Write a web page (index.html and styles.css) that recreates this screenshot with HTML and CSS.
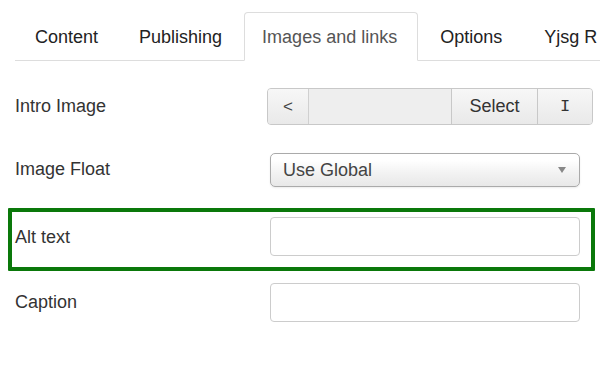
FILE: index.html
```html
<!DOCTYPE html>
<html lang="en">
<head>
    <meta charset="UTF-8">
    <title>Images and links</title>
    <link rel="stylesheet" href="styles.css">
</head>
<body>

    <!-- Tabs -->
    <ul class="tabs">
        <li class="tab">Content</li>
        <li class="tab">Publishing</li>
        <li class="tab active">Images and links</li>
        <li class="tab">Options</li>
        <li class="tab">Yjsg R</li>
    </ul>

    <!-- Fields -->
    <div class="fields">
        <div class="row row-image">
            <label class="label">Intro Image</label>
            <div class="media-group">
                <span class="btn btn-prev">&lt;</span>
                <span class="media-path"></span>
                <span class="btn btn-select">Select</span>
                <span class="btn btn-clear">I</span>
            </div>
        </div>

        <div class="row row-float">
            <label class="label">Image Float</label>
            <div class="select">
                <span>Use Global</span>
                <span class="caret"></span>
            </div>
        </div>

        <div class="row row-alt">
            <label class="label">Alt text</label>
            <input type="text" class="text-input" />
        </div>

        <div class="row row-caption">
            <label class="label">Caption</label>
            <input type="text" class="text-input" />
        </div>
    </div>

</body>
</html>
```

FILE: styles.css
```css
/* Reset */
body, ul {
    margin: 0;
    padding: 0;
}

body {
    background: #fff;
    font-family: 'Liberation Sans', Arial, sans-serif;
    font-size: 18px;
    color: #333;
    width: 600px;
    overflow: hidden;
}

/* Tabs */
.tabs {
    list-style: none;
    display: flex;
    margin: 12px 0 0 15px;
    border-bottom: 1px solid #ddd;
    white-space: nowrap;
}

.tab {
    height: 47px;
    line-height: 48px;
    padding: 0 20px 0 19px;
    color: #222;
    border: 1px solid transparent;
    border-bottom: none;
    margin-bottom: -1px;
}

.tab.active {
    color: #555;
    background: #fff;
    border-color: #ddd;
    border-bottom: 1px solid #fff;
    border-radius: 4px 4px 0 0;
    padding: 0 20px 0 17px;
    margin-left: 1px;
}

.tab:nth-child(4) {
    padding-left: 21px;
}

.tab:nth-child(5) {
    padding-left: 20px;
}

/* Rows */
.fields {
    padding-left: 8px;
}

.row {
    display: flex;
    align-items: center;
    width: 587px;
    box-sizing: border-box;
    padding-left: 7px;
}

.label {
    width: 255px;
    flex-shrink: 0;
}

.row-image {
    margin-top: 27px;
    height: 37px;
}

.row-image .label {
    width: 252px;
}

.row-float {
    margin-top: 28px;
    height: 33px;
}

.row-alt {
    margin-top: 22px;
    border: 4px solid #0a780a;
    border-radius: 1px;
    padding: 5px 0 11px 3px;
}

.row-alt .label {
    padding-top: 2px;
}

.row-caption {
    margin-top: 12px;
}

/* Media field */
.media-group {
    display: flex;
    height: 37px;
    width: 326px;
    border: 1px solid #c8c8c8;
    border-radius: 4px;
    box-sizing: border-box;
    overflow: hidden;
    background: #eee;
}

.btn {
    display: flex;
    align-items: center;
    justify-content: center;
    background: linear-gradient(#f7f7f7, #e9e9e9);
    color: #333;
}

.btn-prev {
    width: 40px;
    border-right: 1px solid #d0d0d0;
    font-size: 17px;
    color: #444;
}

.media-path {
    flex: 1;
    background: #eee;
}

.btn-select {
    width: 85px;
    border-left: 1px solid #c8c8c8;
}

.btn-clear {
    width: 54px;
    border-left: 1px solid #c8c8c8;
    font-family: 'Liberation Mono', monospace;
    font-size: 17px;
}

/* Select */
.select {
    display: flex;
    align-items: center;
    justify-content: space-between;
    width: 310px;
    height: 34px;
    box-sizing: border-box;
    padding: 1px 13px 0 12px;
    border: 1px solid #aaa;
    border-radius: 5px;
    background: linear-gradient(#fff 20%, #f2f2f2 60%, #e8e8e8);
    box-shadow: 0 1px 2px rgba(0, 0, 0, 0.08);
    color: #444;
}

.caret {
    width: 0;
    height: 0;
    border-left: 4px solid transparent;
    border-right: 4px solid transparent;
    border-top: 6px solid #888;
}

/* Text inputs */
.text-input {
    width: 310px;
    height: 39px;
    box-sizing: border-box;
    margin: 0;
    border: 1px solid #ccc;
    border-radius: 4px;
    outline: none;
    background: #fff;
}
```
